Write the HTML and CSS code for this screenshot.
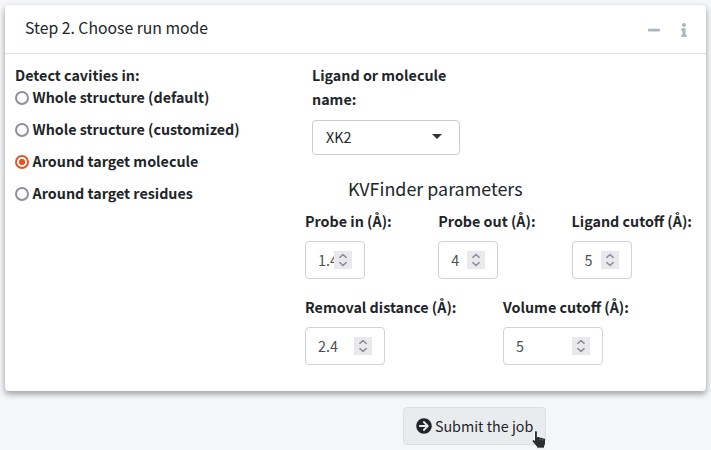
FILE: index.html
```html
<!DOCTYPE html>
<html lang="en">
<head>
<meta charset="utf-8">
<title>Run mode</title>
<link rel="stylesheet" href="styles.css">
</head>
<body>
<svg class="defs" aria-hidden="true">
  <symbol id="spin" viewBox="0 0 18 18"><path d="M5.9 6.3 9 3.5l3.1 2.8M5.9 11.7 9 14.5l3.1-2.8" fill="none" stroke="#8f8f9d" stroke-width="1.6" stroke-linecap="round" stroke-linejoin="round"/></symbol>
</svg>
<section class="card">
  <header class="card-header">
    <h1 class="title">Step 2. Choose run mode</h1>
    <svg class="tool minus" viewBox="0 0 14 16"><path d="M1.9 6.7h10.2a.9.9 0 0 1 .9.9v1a.9.9 0 0 1-.9.9H1.900a.9.9 0 0 1-.9-.9v-1a.9.9 0 0 1 .9-.9z"/></svg>
    <svg class="tool info" viewBox="0 0 192 512"><path d="M20 424.229h20V279.771H20c-11.046 0-20-8.954-20-20V212c0-11.046 8.954-20 20-20h112c11.046 0 20 8.954 20 20v212.229h20c11.046 0 20 8.954 20 20V492c0 11.046-8.954 20-20 20H20c-11.046 0-20-8.954-20-20v-47.771c0-11.046 8.954-20 20-20zM96 0C56.235 0 24 32.235 24 72s32.235 72 72 72 72-32.235 72-72S135.764 0 96 0z"/></svg>
  </header>
  <div class="card-body">
    <div class="modes">
      <div class="label">Detect cavities in:</div>
      <label class="option"><span class="radio"></span>Whole structure (default)</label>
      <label class="option"><span class="radio"></span>Whole structure (customized)</label>
      <label class="option"><span class="radio checked"></span>Around target molecule</label>
      <label class="option"><span class="radio"></span>Around target residues</label>
    </div>
    <div class="settings">
      <div class="ligand">
        <div class="label">Ligand or molecule<br>name:</div>
        <div class="select"><span>XK2</span><span class="caret"></span></div>
      </div>
      <h2 class="heading">KVFinder parameters</h2>
      <div class="row three">
        <div><div class="label">Probe in (Å):</div><div class="number w60"><span class="value">1.4</span><svg class="spin"><use href="#spin"/></svg></div></div>
        <div><div class="label">Probe out (Å):</div><div class="number w60"><span class="value">4</span><svg class="spin"><use href="#spin"/></svg></div></div>
        <div><div class="label">Ligand cutoff (Å):</div><div class="number w60"><span class="value">5</span><svg class="spin"><use href="#spin"/></svg></div></div>
      </div>
      <div class="row two">
        <div><div class="label">Removal distance (Å):</div><div class="number w80"><span class="value">2.4</span><svg class="spin"><use href="#spin"/></svg></div></div>
        <div><div class="label">Volume cutoff (Å):</div><div class="number w100"><span class="value">5</span><svg class="spin"><use href="#spin"/></svg></div></div>
      </div>
    </div>
  </div>
</section>
<div class="submit">
  <svg class="arrow" viewBox="0 0 512 512"><path d="M256 8c137 0 248 111 248 248S393 504 256 504 8 393 8 256 119 8 256 8zm-28.900 143.600l75.500 72.400H120c-13.300 0-24 10.700-24 24v16c0 13.300 10.700 24 24 24h182.600l-75.500 72.400c-9.700 9.300-9.900 24.800-.4 34.300l11 10.900c9.400 9.400 24.600 9.400 33.900 0L404.300 273c9.400-9.400 9.400-24.600 0-33.900L271.600 106.300c-9.400-9.400-24.600-9.400-33.900 0l-11 10.900c-9.500 9.600-9.300 25.100.4 34.400z"/></svg>
  <span>Submit the job</span>
  <svg class="cursor" viewBox="0 0 18 20"><path d="M3.500 2.200c0-2 2.800-2 2.900 0v4.700c.6-.6 2.400-.4 2.700.5.800-.5 2.300-.2 2.700.7 1-.4 2.800 0 2.800 1.500v3.400c0 1.500-.8 2.600-1.100 3.500v1.700H5.700v-1.400L1.500 12c-1.300-1.800.6-3.200 2-1.700z" fill="#2b2d2f" stroke="#fff" stroke-width="1"/><path d="M8.900 8.500v1.800M11.500 9.200v1.500" stroke="#888" stroke-width=".7"/></svg>
</div>
</body>
</html>
```
FILE: styles.css
```css
* { box-sizing: border-box; }
body {
  margin: 0;
  padding: 5px 5px 0;
  height: 450px;
  overflow: hidden;
  background: #f4f6f9;
  color: #212529;
  font: 400 14.3px/24px "Noto Sans CJK SC", "Noto Sans", sans-serif;
}
.defs { position: absolute; width: 0; height: 0; }
.card {
  width: 701px;
  height: 386px;
  background: #fff;
  border-radius: 4px;
  box-shadow: 0 3px 6px rgba(0,0,0,.16), 0 3px 6px rgba(0,0,0,.23);
}
.card-header {
  display: flex;
  align-items: center;
  height: 49px;
  padding: 0 19px 0 20px;
  border-bottom: 1px solid #dfdfdf;
}
.title { flex: 1; margin: 0; padding-bottom: 2px; font-size: 15.75px; font-weight: 400; line-height: 24px; }
.tool { fill: #adb5bd; }
.minus { width: 14px; height: 16px; margin: 1px 20px 0 0; }
.info { width: 6px; height: 14px; margin-top: 1px; }
.card-body { display: flex; padding: 9px 0 0 10px; }
.modes { width: 290px; }
.label { font-weight: 700; white-space: nowrap; }
.option { display: flex; align-items: center; height: 20px; margin-bottom: 12px; font-weight: 700; }
.radio {
  width: 14px;
  height: 14px;
  margin: 2px 3.6px 0 0;
  border: 2px solid #8f8f9d;
  border-radius: 50%;
}
.checked { border-color: #e95420; background: radial-gradient(circle, #e95420 2.800px, #fff 3.400px); }
.ligand { width: 148px; margin-left: 7px; }
.select {
  display: flex;
  align-items: center;
  justify-content: space-between;
  height: 35px;
  margin-top: 9px;
  padding: 0 17px 2px 13px;
  border: 1px solid #ccc;
  border-radius: 4px;
}
.caret { border: 5px solid transparent; border-top-color: #333; border-bottom: 0; }
.heading { margin: 21px 0 0 43px; font-size: 17.9px; font-weight: 400; line-height: 24px; }
.row { display: grid; }
.three { grid-template-columns: 133.300px 133.300px 125px; margin-top: 9px; }
.two { grid-template-columns: 198px 180px; margin-top: 16px; }
.number {
  display: flex;
  align-items: center;
  height: 38px;
  margin-top: 8px;
  padding: 0 12px;
  border: 1px solid #ced4da;
  border-radius: 4px;
  color: #495057;
}
.w60 { width: 60px; }
.w80 { width: 80px; }
.w100 { width: 100px; }
.value { flex: 1; min-width: 0; overflow: hidden; }
.spin { flex: none; width: 18px; height: 18px; background: #e9e9ed; }
.submit {
  position: relative;
  display: flex;
  align-items: center;
  width: 143px;
  height: 38px;
  margin: 16px 0 0 398px;
  padding-left: 11.500px;
  border: 1px solid #ddd;
  border-radius: 4px;
  background: #e9ecef;
  white-space: nowrap;
}
.arrow { width: 16px; height: 16px; margin-right: 3.400px; fill: #212529; }
.cursor { position: absolute; left: 127px; top: 22px; width: 18px; height: 20px; }
```
